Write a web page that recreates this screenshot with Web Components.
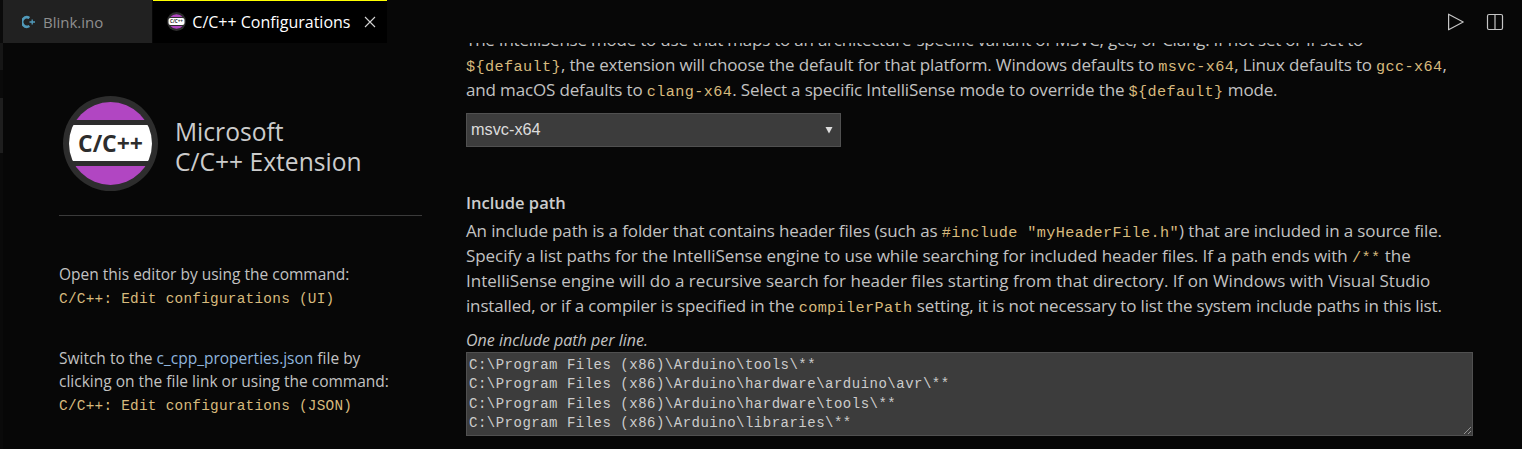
<!DOCTYPE html>
<html lang="en">
<head>
<meta charset="UTF-8">
<title>C/C++ Configurations</title>
<style>
  html, body { margin: 0; height: 100%; background: #070707; overflow: hidden; }
  body { display: flex; font-family: "Open Sans", "Noto Sans", sans-serif; color: #ccc; }
  .editor { flex: 1; min-width: 0; }
  .body { display: flex; height: 406px; overflow: hidden; }
  .settings { margin-left: 44px; margin-top: -16px; flex: 1; min-width: 0; }
</style>
</head>
<body>

<template id="activity-strip">
  <style>
    :host { display: flex; flex-direction: column; width: 3px; flex: none; background: #0a0a0a; }
    .a { height: 27px; margin-top: 43px; background: #161616; }
    .b { height: 55px; margin-top: 28px; background: #1e1e1e; }
  </style>
  <div class="a"></div>
  <div class="b"></div>
</template>

<template id="tab-bar">
  <style>
    :host { display: flex; height: 43px; background: #070707; }
    .tabs { display: flex; gap: 1px; }
    .actions { margin-left: auto; display: flex; align-items: center; gap: 21px; padding-right: 18px; }
    svg { display: block; }
  </style>
  <div class="tabs"><slot></slot></div>
  <div class="actions">
    <svg width="18" height="18" viewBox="0 0 18 18" fill="none" stroke="#c5c5c5" stroke-width="1.2" stroke-linejoin="round"><path d="M1.6 1.2 16.2 9 1.6 16.8z"/></svg>
    <svg width="18" height="18" viewBox="0 0 18 18" fill="none" stroke="#c5c5c5" stroke-width="1.2"><rect x="1.5" y="1.5" width="15" height="15" rx="1.5"/><path d="M9 1.5v15"/></svg>
  </div>
</template>

<template id="editor-tab">
  <style>
    :host { display: flex; align-items: center; height: 43px; box-sizing: border-box; background: #212121; color: #8f8f8f; font-size: 15px; padding: 0 49px 0 19px; gap: 7px; white-space: nowrap; }
    :host([active]) { background: #000; color: #fff; font-size: 16px; border-top: 1px solid #ff0; padding: 0 11px 1px 14px; gap: 6px; }
    .close { margin-left: 8px; display: none; }
    :host([active]) .close { display: block; }
    ::slotted(svg) { display: block; }
  </style>
  <slot name="icon"></slot>
  <span><slot></slot></span>
  <svg class="close" width="12" height="12" viewBox="0 0 12 12" stroke="#d4d4d4" stroke-width="1.1" fill="none"><path d="M1 1l10 10M11 1 1 11"/></svg>
</template>

<template id="cpp-logo">
  <style>
    :host { display: block; width: 95px; height: 95px; flex: none; }
    svg { display: block; }
    text { font-family: "Open Sans", "Noto Sans", sans-serif; font-weight: 700; font-size: 23.5px; fill: #2d2d2d; }
  </style>
  <svg width="95" height="95" viewBox="0 0 95 95">
    <defs><clipPath id="inner"><circle cx="47.5" cy="47.5" r="41.5"/></clipPath></defs>
    <circle cx="47.5" cy="47.5" r="47.5" fill="#2d2d2d"/>
    <g clip-path="url(#inner)">
      <rect x="0" y="6" width="95" height="18" fill="#b146c2"/>
      <rect x="0" y="29" width="95" height="36" fill="#fff"/>
      <rect x="0" y="70" width="95" height="19" fill="#b146c2"/>
    </g>
    <text x="47.5" y="56" text-anchor="middle" textLength="65" lengthAdjust="spacingAndGlyphs">C/C++</text>
  </svg>
</template>

<template id="side-panel">
  <style>
    :host { display: block; width: 363px; flex: none; margin-left: 56px; box-sizing: border-box; font-size: 15.5px; line-height: 23px; color: #c2c2c2; --code-size: 14.4px; --code-space: 0.25px; }
    .head { display: flex; align-items: center; gap: 17px; padding: 53px 0 24px 4px; border-bottom: 1px solid #3a3a3a; }
    .title { font-size: 24.6px; line-height: 30px; color: #ccc; margin-top: 7px; }
    .notes { padding-top: 47px; }
    ::slotted(p) { margin: 0 0 37.5px; white-space: nowrap; }
  </style>
  <div class="head">
    <cpp-logo></cpp-logo>
    <div class="title">Microsoft<br>C/C++ Extension</div>
  </div>
  <div class="notes"><slot></slot></div>
</template>

<template id="code-text"><style>
    :host { display: inline; font-family: "Liberation Mono", "DejaVu Sans Mono", monospace; color: #d7ba7d; line-height: 1; letter-spacing: var(--code-space, 0.5px); font-size: var(--code-size, 14px); }
  </style><slot></slot></template>

<template id="text-line"><style>
    :host { display: block; white-space: nowrap; }
  </style><slot></slot></template>

<template id="config-setting">
  <style>
    :host { display: block; white-space: nowrap; }
    .name { font-weight: 600; font-size: 16.5px; line-height: 25px; color: #ccc; margin-bottom: var(--name-gap, 0); }
    .desc { font-size: 17px; line-height: 25px; color: #c2c2c2; --code-size: 15.2px; --code-space: 0.38px; }
  </style>
  <div class="name"><slot name="name"></slot></div>
  <div class="desc"><slot></slot></div>
  <slot name="control"></slot>
</template>

<template id="select-box">
  <style>
    :host { display: flex; align-items: center; justify-content: space-between; box-sizing: border-box; width: 375px; height: 34px; background: #3c3c3c; border: 1px solid #505050; padding: 0 7px 2px 4px; font-family: "Liberation Sans", Arial, sans-serif; font-size: 16.3px; color: #ddd; }
    svg { display: block; margin-top: 2px; }
  </style>
  <span><slot></slot></span>
  <svg width="8" height="8" viewBox="0 0 8 8" fill="#ddd"><path d="M.5 1h7L4 7.5z"/></svg>
</template>

<template id="path-area">
  <style>
    :host { display: block; position: relative; box-sizing: border-box; width: 1007px; height: 84px; background: #3c3c3c; border: 1px solid #505050; padding: 3px 2px 0; font-family: "Liberation Mono", "DejaVu Sans Mono", monospace; font-size: 14px; letter-spacing: 0.5px; line-height: 19.33px; color: #ccc; overflow: hidden; }
    .lines { white-space: pre; }
    svg { position: absolute; right: 0; bottom: 0; display: block; }
  </style>
  <div class="lines"><slot></slot></div>
  <svg width="9" height="9" viewBox="0 0 9 9" stroke="#bbb" stroke-width="1" fill="none" stroke-dasharray="1 .4"><path d="M1 8 8 1M5 8 8 5"/></svg>
</template>

<script>
  function define(name) {
    customElements.define(name, class extends HTMLElement {
      constructor() {
        super();
        this.attachShadow({ mode: "open" });
        this.shadowRoot.appendChild(document.querySelector("#" + name).content.cloneNode(true));
      }
    });
  }
  ["activity-strip", "tab-bar", "editor-tab", "cpp-logo", "side-panel", "code-text", "text-line", "config-setting", "select-box", "path-area"].forEach(define);
</script>

<activity-strip></activity-strip>

<div class="editor">
<tab-bar>
  <editor-tab>
    <svg slot="icon" width="14" height="16" viewBox="0 0 14 16" fill="none"><path d="M7.4 4A4.7 4.7 0 1 0 7.4 12" stroke="#519aba" stroke-width="2.6"/><path d="M7.5 8H13M10.2 5.6v4.8" stroke="#519aba" stroke-width="1.3"/></svg>
    Blink.ino
  </editor-tab>
  <editor-tab active>
    <svg slot="icon" width="19" height="19" viewBox="0 0 19 19">
      <circle cx="9.5" cy="9.5" r="9.5" fill="#2d2d2d"/>
      <path d="M3.4 5h12.2A8 8 0 0 0 3.4 5zM3.4 14h12.2A8 8 0 0 1 3.4 14z" fill="#b146c2"/>
      <rect x="1.5" y="6" width="16" height="7" rx="2" fill="#fff"/>
      <text x="9.5" y="11.2" text-anchor="middle" font-size="4.6" font-weight="700" font-family="Open Sans, sans-serif" fill="#2d2d2d">C/C++</text>
    </svg>
    C/C++ Configurations
  </editor-tab>
</tab-bar>

<div class="body">
  <side-panel>
    <p>Open this editor by using the command:<br><code-text>C/C++: Edit configurations (UI)</code-text></p>
    <p>Switch to the <span style="color:#8fb4dc">c_cpp_properties.json</span> file by<br>clicking on the file link or using the command:<br><code-text>C/C++: Edit configurations (JSON)</code-text></p>
  </side-panel>
  <div class="settings">
    <config-setting>
      <text-line style="letter-spacing:-.22px">The IntelliSense mode to use that maps to an architecture-specific variant of MSVC, gcc, or Clang. If not set or if set to</text-line>
      <text-line style="letter-spacing:-.17px"><code-text>${default}</code-text>, the extension will choose the default for that platform. Windows defaults to <code-text>msvc-x64</code-text>, Linux defaults to <code-text>gcc-x64</code-text>,</text-line>
      <text-line style="letter-spacing:-.15px">and macOS defaults to <code-text>clang-x64</code-text>. Select a specific IntelliSense mode to override the <code-text>${default}</code-text> mode.</text-line>
      <select-box slot="control" style="margin-top:11px">msvc-x64</select-box>
    </config-setting>
    <config-setting style="margin-top:43px; --name-gap:3px">
      <span slot="name">Include path</span>
      <text-line style="letter-spacing:-.13px">An include path is a folder that contains header files (such as <code-text>#include "myHeaderFile.h"</code-text>) that are included in a source file.</text-line>
      <text-line style="letter-spacing:-.06px">Specify a list paths for the IntelliSense engine to use while searching for included header files. If a path ends with <code-text>/**</code-text> the</text-line>
      <text-line style="letter-spacing:.02px">IntelliSense engine will do a recursive search for header files starting from that directory. If on Windows with Visual Studio</text-line>
      <text-line style="letter-spacing:-.17px">installed, or if a compiler is specified in the <code-text>compilerPath</code-text> setting, it is not necessary to list the system include paths in this list.</text-line>
      <div slot="control">
        <div style="font-style:italic; font-size:16px; line-height:24px; margin-top:10px; color:#c2c2c2">One include path per line.</div>
        <path-area>C:\Program Files (x86)\Arduino\tools\**
C:\Program Files (x86)\Arduino\hardware\arduino\avr\**
C:\Program Files (x86)\Arduino\hardware\tools\**
C:\Program Files (x86)\Arduino\libraries\**</path-area>
      </div>
    </config-setting>
  </div>
</div>
</div>

</body>
</html>
